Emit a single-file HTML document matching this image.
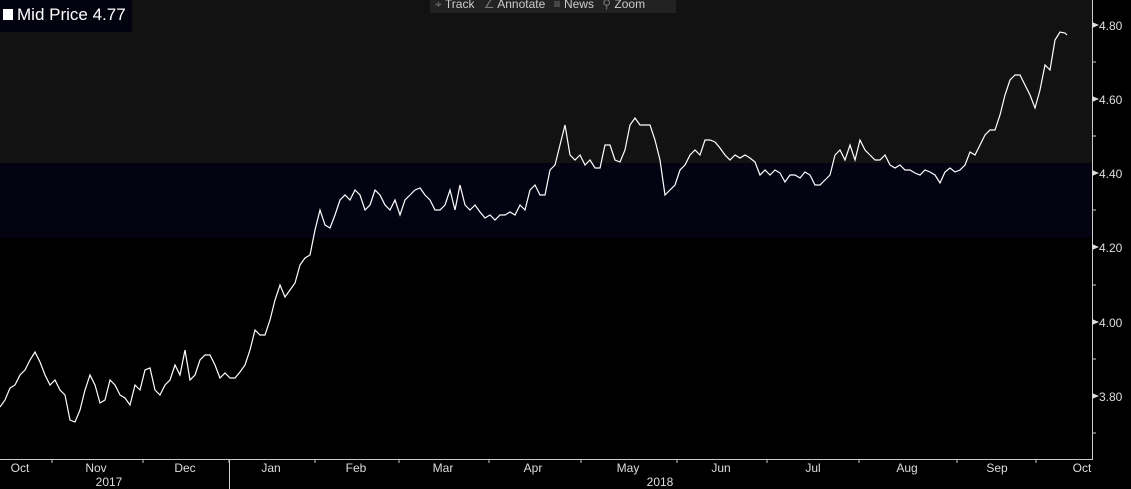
<!DOCTYPE html>
<html><head><style>
body{margin:0;width:1131px;height:489px;background:#000;overflow:hidden;font-family:"Liberation Sans",sans-serif;position:relative}
.t{position:absolute;color:#ddd;font-size:12px}
</style></head><body>
<div style="position:absolute;left:0;top:0;width:1092px;height:163px;background:#121212"></div>
<div style="position:absolute;left:0;top:163px;width:1092px;height:75px;background:#030312"></div>
<div style="position:absolute;left:0;top:0;width:132px;height:32px;background:#030310"></div>
<div style="position:absolute;left:3px;top:9px;width:10px;height:11px;background:#fff"></div>
<div class="t" style="left:17px;top:5px;font-size:17px;color:#fff">Mid Price 4.77</div>
<div style="position:absolute;left:430px;top:0;width:246px;height:13px;background:#222;color:#ccc;font-size:12px;line-height:9px;white-space:nowrap">
<span style="color:#777;margin-left:5px">⌖</span> Track <span style="color:#777;margin-left:6px">∠</span> Annotate <span style="color:#777;margin-left:5px">≡</span> News <span style="color:#777;margin-left:5px">⚲</span> Zoom</div>
<svg width="1131" height="489" style="position:absolute;left:0;top:0">
<polyline fill="none" stroke="#fff" stroke-width="1.2" points="0,407 5,400 10,388 15,385 20,375 25,370 30,360 35,352 40,362 45,375 50,385 55,380 60,390 65,395 70,420 75,422 80,410 85,390 90,375 95,385 100,403 105,400 110,380 115,385 120,395 125,398 130,405 135,385 140,390 145,370 150,368 155,390 160,395 165,385 170,380 175,365 180,375 185,350 190,380 195,375 200,360 205,355 210,355 215,365 220,378 225,373 230,378 235,378 240,372 245,365 250,350 255,330 260,335 265,335 270,320 275,300 280,285 285,297 290,290 295,283 300,265 305,258 310,255 315,230 320,210 325,225 330,228 335,215 340,200 345,195 350,200 355,190 360,195 365,210 370,205 375,190 380,195 385,205 390,210 395,200 400,215 405,200 410,195 415,190 420,188 425,195 430,200 435,210 440,210 445,205 450,190 455,210 460,185 465,205 470,210 475,205 480,212 485,218 490,215 495,220 500,215 505,215 510,212 515,215 520,205 525,210 530,190 535,185 540,195 545,195 550,170 555,165 560,145 565,125 570,155 575,160 580,155 585,165 590,160 595,168 600,168 605,145 610,145 615,160 620,162 625,150 630,125 635,118 640,125 645,125 650,125 655,140 660,160 665,195 670,190 675,185 680,170 685,165 690,155 695,150 700,155 705,140 710,140 715,142 720,148 725,155 730,160 735,155 740,158 745,155 750,158 755,162 760,175 765,170 770,175 775,170 780,173 785,182 790,175 795,175 800,178 805,172 810,175 815,185 820,185 825,180 830,175 835,155 840,150 845,160 850,145 855,160 860,140 865,150 870,155 875,160 880,160 885,155 890,165 895,168 900,165 905,170 910,170 915,173 920,175 925,170 930,172 935,175 940,183 945,172 950,168 955,172 960,170 965,165 970,152 975,155 980,145 985,135 990,130 995,130 1000,115 1005,95 1010,80 1015,75 1020,75 1025,85 1030,95 1035,108 1040,90 1045,65 1050,70 1055,40 1060,32 1065,33 1067,35"/>
<g stroke="#ccc" stroke-width="1">
<line x1="1092.5" y1="0" x2="1092.5" y2="459"/>
<line x1="0" y1="459.5" x2="1093" y2="459.5"/>
<line x1="229.5" y1="459" x2="229.5" y2="489"/>
<line x1="1092" y1="62" x2="1096" y2="62"/><line x1="1092" y1="136" x2="1096" y2="136"/><line x1="1092" y1="210" x2="1096" y2="210"/><line x1="1092" y1="285" x2="1096" y2="285"/><line x1="1092" y1="359" x2="1096" y2="359"/><line x1="1092" y1="433" x2="1096" y2="433"/>
<g><line x1="52" y1="459" x2="52" y2="463"/><line x1="143" y1="459" x2="143" y2="463"/><line x1="229" y1="459" x2="229" y2="463"/><line x1="315" y1="459" x2="315" y2="463"/><line x1="399" y1="459" x2="399" y2="463"/><line x1="489" y1="459" x2="489" y2="463"/><line x1="581" y1="459" x2="581" y2="463"/><line x1="677" y1="459" x2="677" y2="463"/><line x1="767" y1="459" x2="767" y2="463"/><line x1="859" y1="459" x2="859" y2="463"/><line x1="957" y1="459" x2="957" y2="463"/><line x1="1036" y1="459" x2="1036" y2="463"/></g>
</g>
<g fill="#ddd"><path d="M1092 22 l7 3 l-7 3z"/><path d="M1092 96 l7 3 l-7 3z"/><path d="M1092 170 l7 3 l-7 3z"/><path d="M1092 244 l7 3 l-7 3z"/><path d="M1092 319 l7 3 l-7 3z"/><path d="M1092 393 l7 3 l-7 3z"/></g>
<g fill="#ddd" font-family="Liberation Sans,sans-serif" font-size="12">
<text x="1099" y="30">4.80</text><text x="1099" y="104">4.60</text><text x="1099" y="178">4.40</text><text x="1099" y="252">4.20</text><text x="1099" y="327">4.00</text><text x="1099" y="401">3.80</text>
<g text-anchor="middle"><text x="20" y="472">Oct</text><text x="96" y="472">Nov</text><text x="185" y="472">Dec</text><text x="271" y="472">Jan</text><text x="356" y="472">Feb</text><text x="443" y="472">Mar</text><text x="533" y="472">Apr</text><text x="628" y="472">May</text><text x="721" y="472">Jun</text><text x="813" y="472">Jul</text><text x="907" y="472">Aug</text><text x="997" y="472">Sep</text><text x="1082" y="472">Oct</text>
<text x="109" y="486">2017</text><text x="660" y="486">2018</text></g>
</g>
</svg>
</body></html>
